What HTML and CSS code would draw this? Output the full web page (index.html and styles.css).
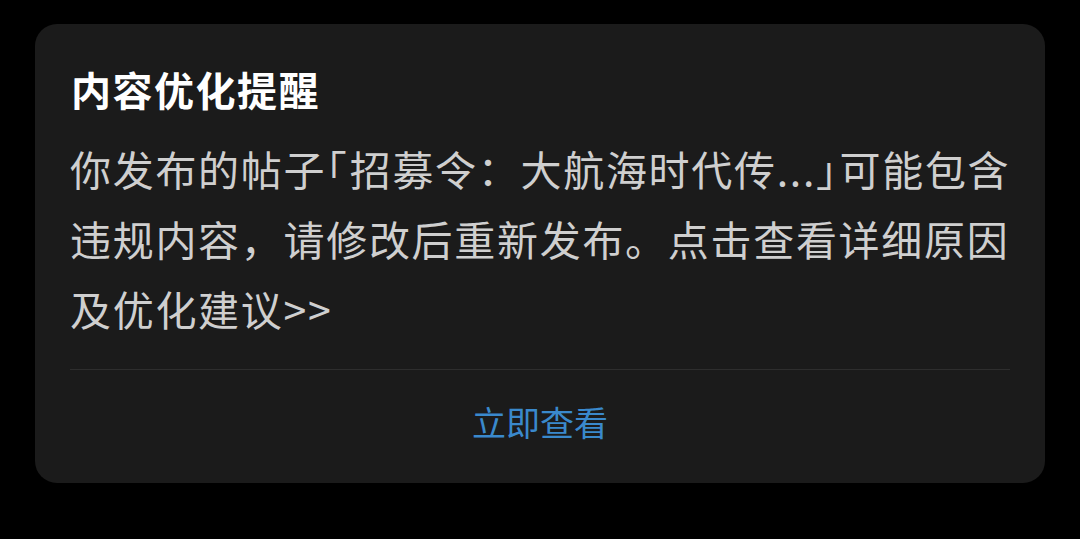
FILE: index.html
```html
<!DOCTYPE html>
<html lang="zh-CN">
<head>
<meta charset="utf-8">
<title>内容优化提醒</title>
<link rel="stylesheet" href="styles.css">
</head>
<body>
<div class="card">
  <h1 class="title">内容优化提醒</h1>
  <p class="message">你发布的帖子<span class="half">「</span>招募令：大航海时代传...<span class="half">」</span>可能包含<br>违规内容，请修改后重新发布。点击查看详细原因<br>及优化建议&gt;&gt;</p>
  <div class="divider"></div>
  <div class="action">立即查看</div>
</div>
</body>
</html>
```
FILE: styles.css
```css
html, body {
  margin: 0;
  padding: 0;
  background: #000;
}
body {
  width: 1080px;
  height: 539px;
  overflow: hidden;
  font-family: "Noto Sans CJK SC", "Noto Sans", sans-serif;
  padding-top: 24px;
  box-sizing: border-box;
}
.card {
  margin: 0 35px;
  width: 1010px;
  height: 459px;
  box-sizing: border-box;
  background: #1b1b1b;
  border-radius: 22px;
  padding: 40px 35px 8px;
  display: flex;
  flex-direction: column;
}
.title {
  margin: 0;
  font-size: 40px;
  line-height: 50px;
  font-weight: 700;
  letter-spacing: 1.5px;
  color: #ffffff;
  padding-left: 1px;
}
.message {
  margin: 19px 0 0;
  font-size: 41px;
  line-height: 70px;
  letter-spacing: 1.7px;
  color: #cfcfcf;
  white-space: nowrap;
}
.half {
  font-feature-settings: "halt" 1;
  letter-spacing: 3px;
}
.divider {
  margin-top: 26px;
  height: 1px;
  background: #2e2e2e;
}
.action {
  height: 104px;
  line-height: 104px;
  text-align: center;
  font-size: 34px;
  color: #3a89cc;
}
```
